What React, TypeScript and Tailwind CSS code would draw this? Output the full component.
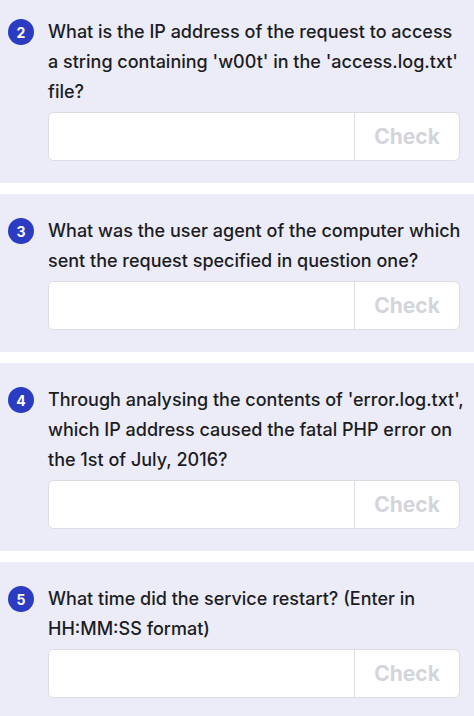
const questions = [
  {
    n: 2,
    lines: [
      'What is the IP address of the request to access',
      "a string containing 'w00t' in the 'access.log.txt'",
      'file?',
    ],
  },
  {
    n: 3,
    lines: ['What was the user agent of the computer which', 'sent the request specified in question one?'],
  },
  {
    n: 4,
    lines: [
      "Through analysing the contents of 'error.log.txt',",
      'which IP address caused the fatal PHP error on',
      'the 1st of July, 2016?',
    ],
  },
  {
    n: 5,
    lines: ['What time did the service restart? (Enter in', 'HH:MM:SS format)'],
  },
]

export default function App() {
  return (
    <div
      className="min-h-screen bg-white overflow-hidden"
      style={{ fontFamily: 'Inter, "Noto Sans", sans-serif' }}
    >
      <div className="-mt-[5px] flex flex-col gap-[11px]">
        {questions.map((q) => (
          <div key={q.n} className="bg-[#ebecf8] pt-[22px] pb-[22px] pl-[8px] pr-[14px]">
            <div className="flex items-start">
              <div className="w-[40px] shrink-0 pt-[2px]">
                <div className="w-[26px] h-[26px] rounded-full bg-[#2b3cc0] text-white text-[14px] font-bold flex items-center justify-center">
                  {q.n}
                </div>
              </div>
              <p className="text-[18px] leading-[30px] font-medium text-[#1c1c21] whitespace-nowrap">
                {q.lines.map((l, i) => (
                  <span key={i} className="block">
                    {l}
                  </span>
                ))}
              </p>
            </div>
            <div className="ml-[40px] mt-[5px] flex h-[49px] rounded-[6px] border border-[#dcdde3] bg-white overflow-hidden">
              <input className="flex-1 min-w-0 outline-none px-3 bg-white" />
              <button className="w-[105px] border-l border-[#dcdde3] text-[21px] font-bold text-[#d3d5db]">
                Check
              </button>
            </div>
          </div>
        ))}
      </div>
    </div>
  )
}
